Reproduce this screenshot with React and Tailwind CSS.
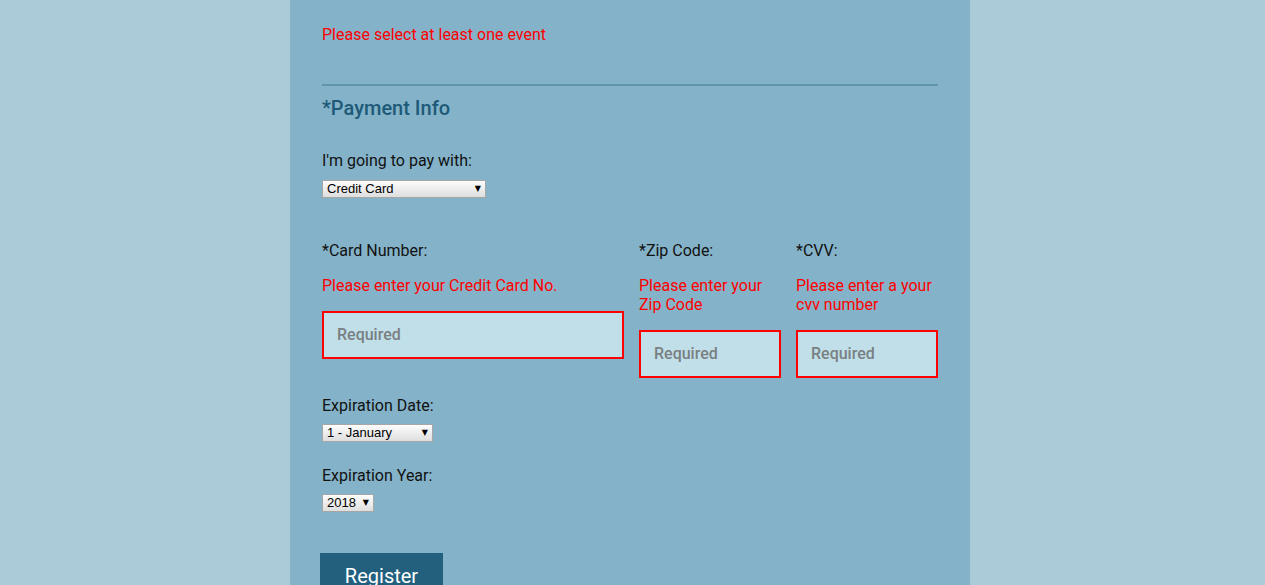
import React from "react";

function FakeSelect({ label, width }) {
  return (
    <div
      className="flex items-center justify-between h-[18px] border border-[#a6a6a6] bg-gradient-to-b from-[#fdfdfd] to-[#dedede] pl-[4px] pr-[4px] text-[13px] text-black leading-none"
      style={{ width }}
    >
      <span className="font-['Liberation_Sans',Arial,sans-serif] -mt-[1px]">{label}</span>
      <span className="text-[8px] font-['DejaVu_Sans',sans-serif] -mt-[1px]">▼</span>
    </div>
  );
}

function Field({ label, error, width }) {
  return (
    <div className="flex flex-col" style={{ width }}>
      <div className="leading-5 text-[#111]">{label}</div>
      <div className="mt-[15px] leading-[19px] text-[#ff0000]">{error}</div>
      <div className="mt-[16px] h-[48px] border-2 border-[#ff0000] bg-[#c0dfe9] flex items-center pl-[13px] font-medium text-[#7a7f82]">
        Required
      </div>
    </div>
  );
}

export default function App() {
  return (
    <div className="h-[585px] overflow-hidden bg-[#abcbd9] flex justify-center pr-[5px] font-['Roboto',sans-serif] text-[16px]">
      <div className="w-[680px] shrink-0 bg-[#84b3c9] px-[32px] pt-[25px]">
        <div className="leading-5 text-[#ff0000]">Please select at least one event</div>
        <div className="mt-[39px] border-t-2 border-[#5f96ae]" />
        <h2 className="mt-[8px] text-[20px] leading-[28px] font-medium text-[#1e5a78]">*Payment Info</h2>
        <div className="mt-[29px] leading-5 text-[#111]">I'm going to pay with:</div>
        <div className="mt-[9px]">
          <FakeSelect label="Credit Card" width={164} />
        </div>
        <div className="mt-[43px] flex items-start gap-[15px]">
          <Field label="*Card Number:" error="Please enter your Credit Card No." width={302} />
          <Field
            label="*Zip Code:"
            error={<>Please enter your<br />Zip Code</>}
            width={142}
          />
          <Field
            label="*CVV:"
            error={<>Please enter a your<br />cvv number</>}
            width={142}
          />
        </div>
        <div className="mt-[18px] leading-5 text-[#111]">Expiration Date:</div>
        <div className="mt-[8px]">
          <FakeSelect label="1 - January" width={111} />
        </div>
        <div className="mt-[24px] leading-5 text-[#111]">Expiration Year:</div>
        <div className="mt-[8px]">
          <FakeSelect label="2018" width={52} />
        </div>
        <button className="mt-[41px] -ml-[2px] w-[123px] h-[48px] bg-[#22607e] text-white text-[20px] leading-[28px] flex items-start justify-center pt-[9px]">
          Register
        </button>
      </div>
    </div>
  );
}
